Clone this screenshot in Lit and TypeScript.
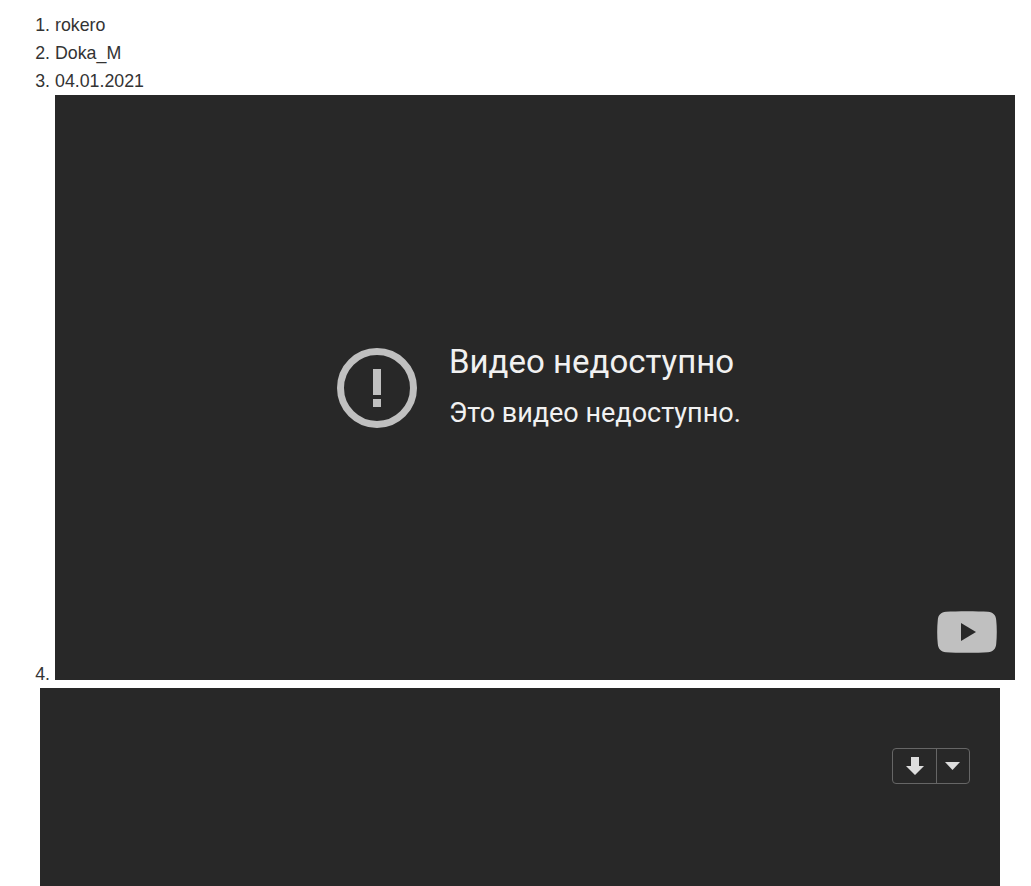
import { LitElement, html, css } from "lit";
import { customElement } from "lit/decorators.js";

@customElement("app-root")
export class AppRoot extends LitElement {
  static styles = css`
    :host {
      display: block;
      height: 886px;
      overflow: hidden;
      background: #fff;
      font-family: "Liberation Sans", Arial, sans-serif;
      font-size: 17.8px;
      line-height: 28px;
      color: #333;
    }
    .list {
      margin: 0;
      padding: 11px 0 0 55px;
    }
    .video {
      display: inline-block;
      position: relative;
      overflow: hidden;
      width: 960px;
      height: 585px;
      background: #282828;
      font-family: Roboto, sans-serif;
      color: #f1f1f1;
    }
    .error {
      display: flex;
      align-items: center;
      gap: 32px;
      height: 100%;
      padding-left: 282px;
      box-sizing: border-box;
    }
    .alert {
      display: block;
      width: 80px;
      height: 80px;
      flex: none;
    }
    .text {
      margin-top: -4px;
    }
    .reason {
      font-size: 33px;
      line-height: 40px;
      font-weight: 400;
      white-space: nowrap;
    }
    .sub {
      font-size: 27px;
      line-height: 32px;
      margin-top: 15px;
      white-space: nowrap;
    }
    .logo {
      position: absolute;
      left: 882px;
      top: 516px;
      width: 60px;
      height: 42px;
    }
    .second {
      margin-left: 40px;
      width: 960px;
      height: 585px;
      background: #282828;
      display: flex;
      justify-content: flex-end;
      align-items: flex-start;
      padding: 60px 30px 0 0;
      box-sizing: border-box;
    }
    .btns {
      display: flex;
      width: 78px;
      height: 36px;
      box-sizing: border-box;
      border: 1px solid #666;
      border-radius: 4px;
    }
    .btn {
      display: flex;
      align-items: center;
      justify-content: center;
    }
    .btn.dl {
      width: 44px;
      box-sizing: border-box;
      padding-left: 1px;
      border-right: 1px solid #666;
    }
    .btn.more {
      flex: 1;
      padding-right: 1px;
    }
    svg {
      display: block;
    }
  `;

  render() {
    return html`
      <ol class="list">
        <li>rokero</li>
        <li>Doka_M</li>
        <li>04.01.2021</li>
        <li>
          <div class="video">
            <div class="error">
              <svg class="alert" viewBox="0 0 80 80">
                <circle cx="40" cy="40" r="36.500" fill="none" stroke="#c0c0c0" stroke-width="7"></circle>
                <rect x="36" y="21" width="8" height="26" fill="#c0c0c0"></rect>
                <rect x="36" y="51" width="8" height="8" fill="#c0c0c0"></rect>
              </svg>
              <div class="text">
                <div class="reason">Видео недоступно</div>
                <div class="sub">Это видео недоступно.</div>
              </div>
            </div>
            <svg class="logo" viewBox="0 0 60 42">
              <path
                d="M9 .8C20 0 40 0 51 .8C56 1.200 58.800 4 59.200 9C60 16 60 26 59.200 33C58.800 38 56 40.800 51 41.200C40 42 20 42 9 41.200C4 40.800 1.200 38 .8 33C0 26 0 16 .8 9C1.200 4 4 1.200 9 .8Z"
                fill="#c0c0c0"
              ></path>
              <path d="M24 12L39 21L24 30Z" fill="#282828"></path>
            </svg>
          </div>
        </li>
      </ol>
      <div class="second">
        <div class="btns">
          <div class="btn dl">
            <svg width="18" height="18" viewBox="0 0 18 18">
              <path d="M5 0H13V9H18L9 18L0 9H5Z" fill="#ddd"></path>
            </svg>
          </div>
          <div class="btn more">
            <svg width="15" height="8" viewBox="0 0 15 8">
              <path d="M0 0H15L7.500 8Z" fill="#ddd"></path>
            </svg>
          </div>
        </div>
      </div>
    `;
  }
}
